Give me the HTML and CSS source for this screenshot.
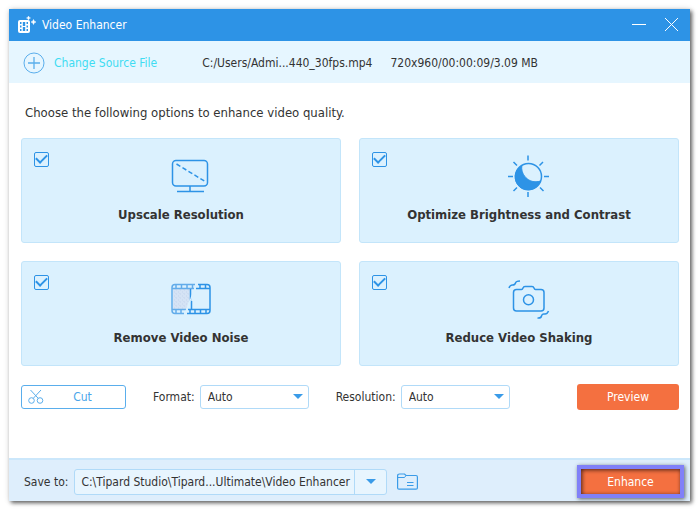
FILE: index.html
```html
<!DOCTYPE html>
<html lang="en">
<head>
    <meta charset="UTF-8">
    <meta name="viewport" content="width=device-width, initial-scale=1.0">
    <title>Video Enhancer</title>
    <link rel="stylesheet" href="styles.css">
</head>
<body>
    <div class="window">
        <header class="titlebar">
            <svg class="logo" width="18" height="18" viewBox="0 0 18 18">
                <rect x="0" y="4" width="12" height="13" rx="2" fill="#fff"/>
                <path d="M2 6h1.5v2H2zM2 9.5h1.5v2H2zM2 13h1.5v2H2zM8.5 6H10v2H8.5zM8.5 9.5H10v2H8.5zM8.5 13H10v2H8.5zM4.8 6h2.4v4H4.8zM4.8 11h2.4v4H4.8z" fill="#2d93e6"/>
                <path d="M10.5 0l.6 1.4 1.4.6-1.4.6-.6 1.4-.6-1.4L8.5 2l1.4-.6zM15.5 3.5l.8 1.7 1.7.8-1.7.8-.8 1.7-.8-1.7-1.7-.8 1.7-.8z" fill="#fff" stroke="#fff" stroke-width=".5"/>
            </svg>
            <h1>Video Enhancer</h1>
            <div class="window-buttons">
                <button aria-label="Minimize">
                    <svg width="14" height="14" viewBox="0 0 14 14"><path d="M0 6.5h14"/></svg>
                </button>
                <button aria-label="Close">
                    <svg width="14" height="14" viewBox="0 0 14 14"><path d="M1 0l13 13M14 0L1 13"/></svg>
                </button>
            </div>
        </header>

        <div class="source">
            <button class="change-source">
                <svg width="22" height="22" viewBox="0 0 22 22" fill="none" stroke="#5aaeec">
                    <circle cx="11" cy="11" r="10"/>
                    <path d="M11 5v12M5 11h12" stroke-width="1.3"/>
                </svg>
                Change Source File
            </button>
            <span class="file-name">C:/Users/Admi...440_30fps.mp4</span>
            <span>720x960/00:00:09/3.09 MB</span>
        </div>

        <main>
            <h2>Choose the following options to enhance video quality.</h2>
            <div class="cards">
                <label class="card">
                    <input type="checkbox" checked>
                    <span class="card-body">
                        <svg class="card-icon" viewBox="0 0 44 44">
                            <rect x="4.5" y="6.500" width="35" height="25.5" rx="3.5"/>
                            <path d="M22 32v5M9 37.5h27"/>
                            <path d="M8.5 10L38 28" stroke-dasharray="4.5 2.5"/>
                        </svg>
                        <span class="card-title">Upscale Resolution</span>
                    </span>
                </label>
                <label class="card">
                    <input type="checkbox" checked>
                    <span class="card-body">
                        <svg class="card-icon" viewBox="0 0 44 44">
                            <circle cx="22.5" cy="22.5" r="13"/>
                            <path d="M16 11.5C14 19 22 31 34.5 27A13 13 0 1 1 16 11.5z" fill="#2d93e6" stroke-width="1"/>
                            <path d="M22 1.5v5M22 38v5M2 22.5h5M38 22.5h5M7.5 8l3.5 3.5M33.5 11.5L37 8M7.5 37l3.5-3.5M34 33.5l3.5 3.5"/>
                        </svg>
                        <span class="card-title">Optimize Brightness and Contrast</span>
                    </span>
                </label>
                <label class="card">
                    <input type="checkbox" checked>
                    <span class="card-body">
                        <svg class="card-icon" viewBox="0 0 44 44">
                            <defs>
                                <pattern id="grain" width="4" height="4" patternUnits="userSpaceOnUse">
                                    <path d="M0 0h4v4H0z" fill="#d5e3f5" stroke="none"/>
                                    <path d="M0 1h1M2 3h1M3 0h1" stroke="#c6d6ee" stroke-width="1"/>
                                </pattern>
                            </defs>
                            <path d="M5 12h17v9l-4 12H5z" fill="url(#grain)" stroke="none"/>
                            <g stroke="#62acea">
                                <path d="M27 7.5H7q-3 0-3 3v23q0 3 3 3H16"/>
                                <path d="M4 11.5H26M4 32.5H18M8 8v4M13.5 8v4M19 8v4M24.5 8v4M8 32.5V36M13 32.5V36"/>
                            </g>
                            <path d="M30 7.5h9q3 0 3 3v23q0 3-3 3H19"/>
                            <path d="M28 11.5h14M20 32.5h22M22.5 12v12M23.5 24v8.5M32 8v4M37.5 8v4M22 32.5V36M27 32.5V36M32.5 32.5V36M38 32.5V36"/>
                            <path d="M29 6L23 21.5 21.5 25 16.5 38" stroke="#dbf1fe" stroke-width="1.3"/>
                        </svg>
                        <span class="card-title">Remove Video Noise</span>
                    </span>
                </label>
                <label class="card">
                    <input type="checkbox" checked>
                    <span class="card-body">
                        <svg class="card-icon" viewBox="0 0 44 44">
                            <path d="M10.5 12.5h5q1 0 1.5-1.5.5-1.5 2-1.5h7q1.500 0 2 1.500t1.500 1.500H35q3 0 3 3V31q0 3-3 3H10.500q-3 0-3-3V15.500q0-3 3-3z"/>
                            <circle cx="22.5" cy="22.8" r="5"/>
                            <path d="M3 11q1-3 3.5-3t3-2T14 4M31.5 41q3.5.5 4-2t3-2 4-3"/>
                        </svg>
                        <span class="card-title">Reduce Video Shaking</span>
                    </span>
                </label>
            </div>

            <div class="toolbar">
                <button class="cut">
                    <svg width="16" height="16" viewBox="0 0 16 16" fill="none" stroke="#5aaeec">
                        <circle cx="3.5" cy="11.5" r="2.8"/>
                        <circle cx="12" cy="11.5" r="2.8"/>
                        <path d="M2.5 1l7.7 8.3M13 1L5.3 9.3"/>
                    </svg>
                    <span>Cut</span>
                </button>
                <label for="format">Format:</label>
                <div class="select">
                    <select id="format"><option>Auto</option></select>
                </div>
                <label for="resolution">Resolution:</label>
                <div class="select">
                    <select id="resolution"><option>Auto</option></select>
                </div>
                <button class="primary">Preview</button>
            </div>
        </main>

        <footer class="save">
            <label for="save-path">Save to:</label>
            <div class="path">
                <input type="text" id="save-path" value="C:\Tipard Studio\Tipard...Ultimate\Video Enhancer">
                <button aria-label="Recent folders"></button>
            </div>
            <button class="folder" aria-label="Open folder">
                <svg width="21" height="17" viewBox="0 0 21 17" fill="none" stroke="#3a9be8">
                    <path d="M.6 15V3q0-2 2-2H7.5l1.5 1.500H19q1.4 0 1.4 1.4V15q0 1.2-1.4 1.2H2Q.6 16.2.6 15z" stroke-width="1.2"/>
                    <path d="M1 4.5h6.5l1.5-2M10 9.5h6.5M10 12.500h6.5"/>
                </svg>
            </button>
            <button class="primary enhance">Enhance</button>
        </footer>
    </div>
</body>
</html>
```
FILE: styles.css
```css
* {
    box-sizing: border-box;
}

body {
    margin: 0;
    padding: 9px 10px 10px 9px;
    min-height: 100vh;
    display: flex;
    background-color: #fff;
    color: #333;
    font-family: Tahoma, "DejaVu Sans Condensed", "DejaVu Sans", sans-serif;
    font-size: 12px;
    line-height: 16px;
}

button, input, select {
    font: inherit;
    color: inherit;
    margin: 0;
}

button {
    padding: 0;
    border: none;
    background: none;
    cursor: pointer;
}

svg {
    display: block;
    flex: none;
}

.window {
    flex: 1;
    display: flex;
    flex-direction: column;
    background-color: #fff;
    box-shadow: 2px 2px 4px rgba(0, 0, 0, 0.6), 0 0 6px rgba(0, 0, 0, 0.12);
}

/* Title bar */
.titlebar {
    display: flex;
    align-items: center;
    gap: 6px;
    height: 32px;
    padding: 0 12px 0 9px;
    background-color: #2d93e6;
    color: #fff;
}

.titlebar h1 {
    margin: 0;
    font-size: 12px;
    font-weight: normal;
}

.window-buttons {
    display: flex;
    gap: 18px;
    margin-left: auto;
}

.window-buttons svg {
    stroke: #fff;
}

/* Source file */
.source {
    display: flex;
    align-items: center;
    height: 42px;
    padding: 2px 14px 0;
    background-color: #e6f6ff;
}

.change-source {
    display: flex;
    align-items: center;
    gap: 9px;
    color: #3fdcf2;
}

.file-name {
    margin: 0 18px 0 45px;
}

/* Options */
main {
    flex: 1;
    padding: 20px 11px 0 12px;
}

h2 {
    margin: 0 0 15px 4px;
    font-size: 13px;
    font-weight: normal;
    line-height: 20px;
}

.cards {
    display: grid;
    grid-template-columns: 1fr 1fr;
    gap: 18px;
}

.card {
    display: grid;
    padding: 12px;
    background-color: #dbf1fe;
    border: 1px solid #c3e5fa;
    border-radius: 3px;
}

.card input,
.card-body {
    grid-area: 1 / 1;
}

.card input {
    appearance: none;
    display: grid;
    place-items: center;
    width: 15px;
    height: 15px;
    margin-top: 1px;
    border: 1px solid #2d93e6;
    border-radius: 2px;
    z-index: 1;
}

.card input:checked::before {
    content: "";
    width: 9px;
    height: 5px;
    margin-bottom: 4px;
    border: solid #2d93e6;
    border-width: 0 0 2px 2px;
    transform: rotate(-45deg);
}

.card-body {
    display: flex;
    flex-direction: column;
    align-items: center;
    gap: 9px;
    padding: 3px 0 7px;
}

.card-icon {
    width: 44px;
    height: 44px;
    margin-left: 18px;
    fill: none;
    stroke: #2d93e6;
    stroke-width: 1.5;
}

.card-title {
    font-size: 13px;
    font-weight: bold;
}

.toolbar {
    display: flex;
    align-items: center;
    margin-top: 18px;
}

.toolbar label {
    margin: 0 5px 0 27px;
}

.cut {
    display: flex;
    align-items: center;
    width: 105px;
    height: 24px;
    padding: 0 6px;
    border: 1px solid #5aaeec;
    border-radius: 3px;
    color: #4aa5ea;
}

.cut span {
    flex: 1;
    padding-left: 2px;
}

.select {
    position: relative;
    width: 109px;
}

.select select {
    appearance: none;
    display: block;
    width: 100%;
    height: 24px;
    padding: 0 7px;
    background-color: #fff;
    border: 1px solid #b0daf8;
    border-radius: 3px;
}

.select::after,
.path button::after {
    content: "";
    border: solid transparent;
    border-width: 5px 5px 0;
    border-top-color: #3a9be8;
}

.select::after {
    position: absolute;
    top: 9px;
    right: 6px;
    pointer-events: none;
}

.primary {
    width: 102px;
    height: 26px;
    margin-left: auto;
    border-radius: 3px;
    background-color: #f47040;
    color: #fff;
}

/* Output folder */
.save {
    display: flex;
    align-items: center;
    height: 43px;
    padding: 2px 6px 0 15px;
    border-top: 2px solid #cbe7fb;
    background-color: #deeefc;
}

.path {
    display: flex;
    width: 313px;
    height: 26px;
    margin: 0 10px 0 6px;
    border: 1px solid #b0daf8;
    border-radius: 3px;
    background-color: #e8f5fe;
}

.path input {
    flex: 1;
    min-width: 0;
    padding: 0 0 0 6px;
    border: none;
    background: none;
}

.path button {
    display: flex;
    align-items: center;
    justify-content: center;
    width: 32px;
    border-left: 1px solid #b0daf8;
}

.enhance {
    width: 107px;
    height: 33px;
    border: 4px solid #8080f8;
    border-radius: 0;
    box-shadow: 1px 1px 4px rgba(0, 0, 0, 0.6), inset 1px 1px 4px rgba(0, 0, 0, 0.7);
}
```
